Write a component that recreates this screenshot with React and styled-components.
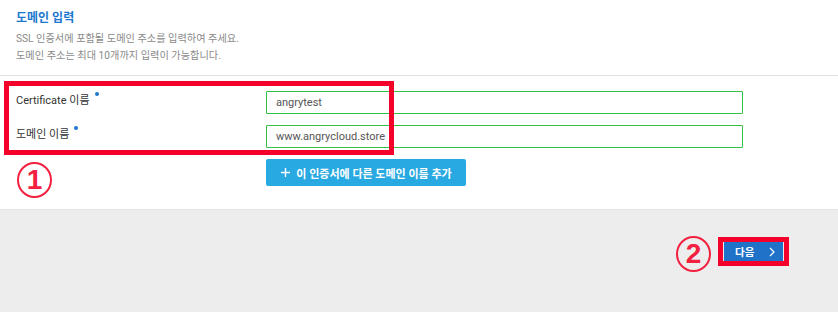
import React from 'react';
import styled, { createGlobalStyle } from 'styled-components';

const GlobalStyle = createGlobalStyle`
  body {
    margin: 0;
    background: #ededed;
    font-family: Roboto, "Noto Sans CJK KR", sans-serif;
  }
`;

const Page = styled.div`
  position: relative;
  width: 838px;
  height: 312px;
  background: #ededed;
`;

const WhitePanel = styled.div`
  background: #fff;
  border-bottom: 1px solid #e3e3e3;
  height: 210px;
  box-sizing: border-box;
`;

const Header = styled.div`
  padding: 10px 16px 11px;
  border-bottom: 1px solid #e0e0e0;
`;

const Title = styled.h2`
  margin: 0 0 4px;
  font-size: 12px;
  line-height: 16px;
  font-weight: 700;
  color: #1c78cf;
`;

const Desc = styled.p`
  margin: 0;
  font-size: 10.2px;
  line-height: 17px;
  color: #8a8a8a;
`;

const Form = styled.div`
  padding: 15px 0 0 16px;
`;

const Row = styled.div`
  display: flex;
  align-items: flex-start;
  margin-bottom: 11px;
`;

const Label = styled.div`
  width: 250px;
  padding-top: 1px;
  font-size: 11px;
  line-height: 14px;
  color: #333;
`;

const Dot = styled.span`
  display: inline-block;
  width: 4px;
  height: 4px;
  border-radius: 50%;
  background: #1c78cf;
  margin-left: 5px;
  vertical-align: 8px;
`;

const Input = styled.div`
  width: 477px;
  height: 23px;
  box-sizing: border-box;
  border: 1px solid #33c043;
  border-radius: 1px;
  padding: 0 9px;
  font-size: 11px;
  line-height: 21px;
  color: #555;
`;

const AddButton = styled.button`
  margin-left: 250px;
  height: 27px;
  width: 200px;
  border: none;
  border-radius: 2px;
  background: #29a9e1;
  color: #fff;
  font-family: inherit;
  font-size: 11px;
  font-weight: 700;
  display: flex;
  align-items: center;
  justify-content: center;
  gap: 5px;
  padding: 0;
`;

const Footer = styled.div`
  display: flex;
  justify-content: flex-end;
  padding: 32px 55px 0 0;
`;

const NextButton = styled.button`
  width: 59px;
  height: 19px;
  border: none;
  background: #1f72c8;
  color: #fff;
  font-family: inherit;
  font-size: 10.5px;
  font-weight: 700;
  display: flex;
  align-items: center;
  justify-content: space-between;
  padding: 0 8px 0 11px;
  box-sizing: border-box;
`;

const RedBox = styled.div`
  position: absolute;
  border: ${({ $w }) => $w || 5}px solid #f5002a;
  box-sizing: border-box;
`;

const Circled = styled.div`
  position: absolute;
  width: 35px;
  height: 36px;
  border: 2px solid #f3203f;
  border-radius: 50%;
  box-sizing: border-box;
  color: #f3203f;
  font-family: "Liberation Sans", sans-serif;
  font-size: 28px;
  font-weight: 700;
  line-height: 32px;
  text-align: center;
`;

const Plus = () => (
  <svg width="11" height="11" viewBox="0 0 11 11">
    <path d="M5.5 1v9M1 5.5h9" stroke="#fff" strokeWidth="1.4" />
  </svg>
);

const Chevron = () => (
  <svg width="6" height="10" viewBox="0 0 6 10">
    <path d="M1 1l4 4-4 4" stroke="#fff" strokeWidth="1.2" fill="none" />
  </svg>
);

const App = () => {
  return (
    <Page>
      <GlobalStyle />
      <WhitePanel>
        <Header>
          <Title>도메인 입력</Title>
          <Desc>SSL 인증서에 포함될 도메인 주소를 입력하여 주세요.</Desc>
          <Desc>도메인 주소는 최대 10개까지 입력이 가능합니다.</Desc>
        </Header>
        <Form>
          <Row>
            <Label>Certificate 이름<Dot /></Label>
            <Input>angrytest</Input>
          </Row>
          <Row>
            <Label>도메인 이름<Dot /></Label>
            <Input>www.angrycloud.store</Input>
          </Row>
          <AddButton><Plus />이 인증서에 다른 도메인 이름 추가</AddButton>
        </Form>
      </WhitePanel>
      <Footer>
        <NextButton>다음<Chevron /></NextButton>
      </Footer>
      <RedBox style={{ left: 4, top: 81, width: 390, height: 74 }} />
      <RedBox style={{ left: 718, top: 237, width: 71, height: 29 }} />
      <Circled style={{ left: 17, top: 162 }}>1</Circled>
      <Circled style={{ left: 676, top: 236 }}>2</Circled>
    </Page>
  );
};

export default App;
